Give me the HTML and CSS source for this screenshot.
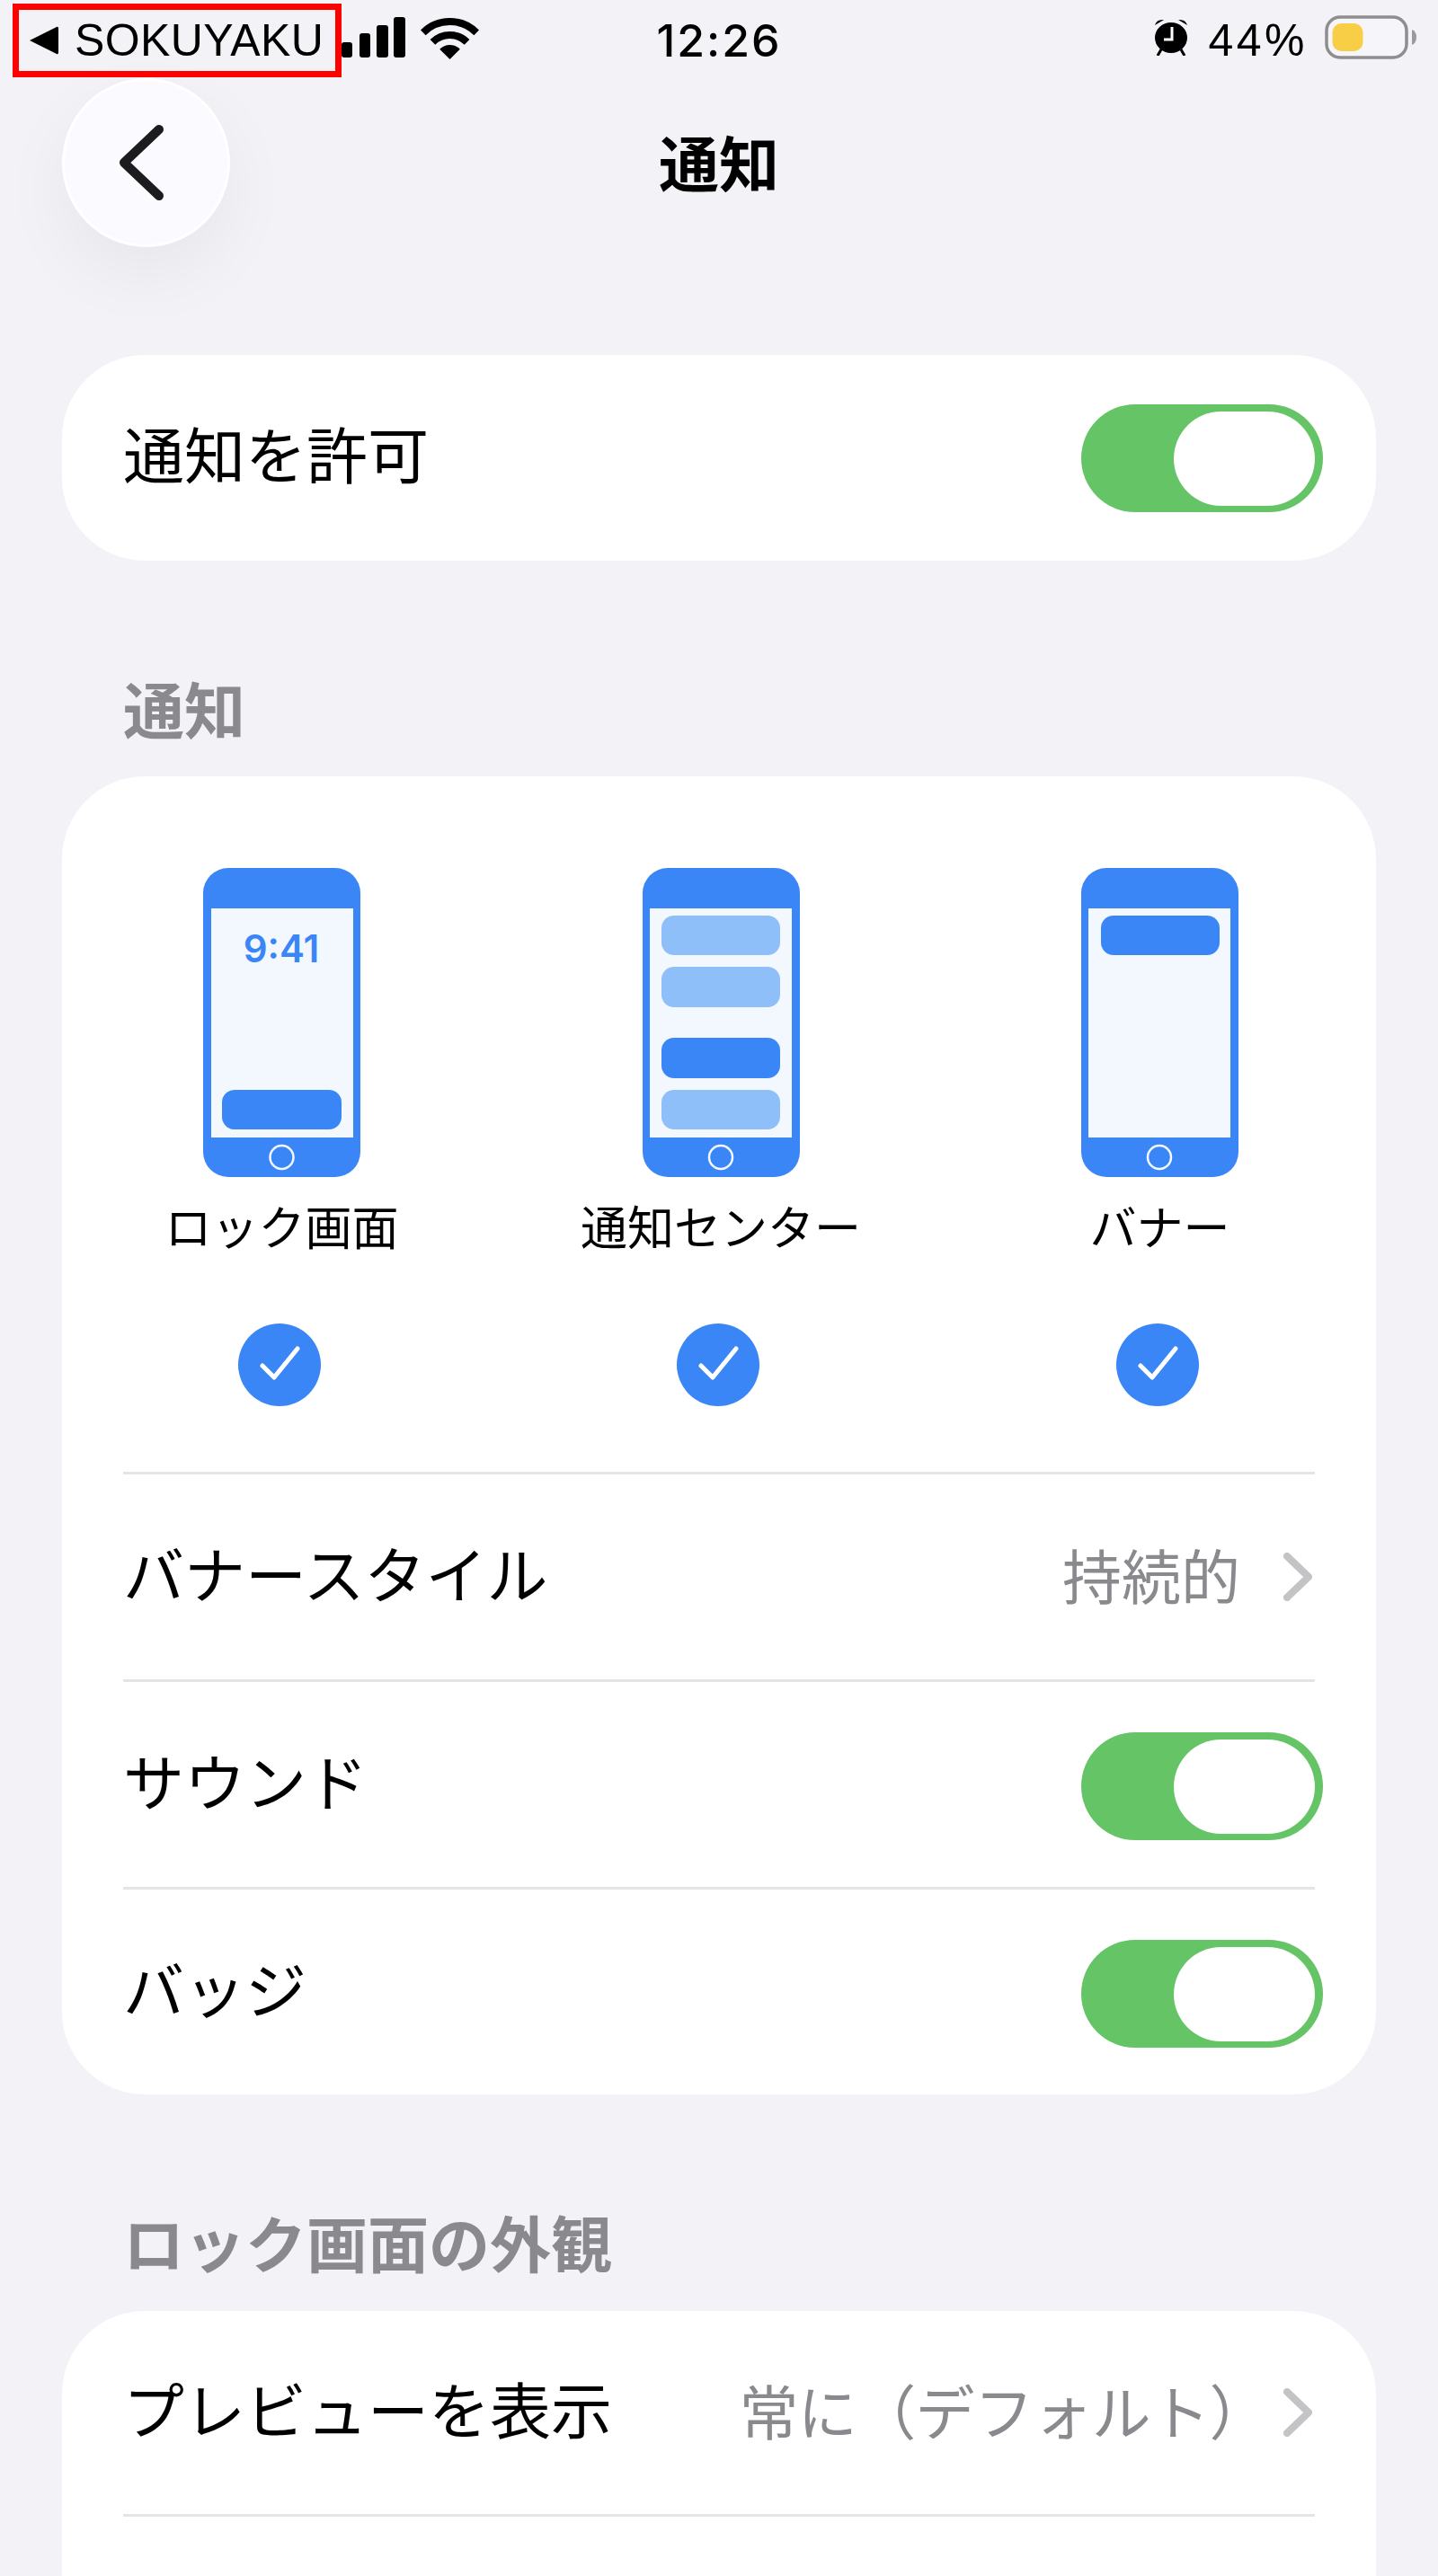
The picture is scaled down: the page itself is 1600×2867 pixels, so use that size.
FILE: index.html
```html
<!DOCTYPE html>
<html lang="ja">
<head>
  <meta charset="UTF-8">
  <title>通知</title>
  <link rel="stylesheet" href="styles.css">
</head>
<body>

  <div class="status-bar">
    <div class="status-left">
      <div class="carrier">
        <svg class="carrier-arrow" viewBox="0 0 33 32"><path d="M1 16 L31 1 Q33 0 33 3 V29 Q33 32 31 31 Z"/></svg>
        <span>SOKUYAKU</span>
      </div>
      <svg class="signal" width="71" height="45" viewBox="0 0 71 45">
        <rect x="0" y="28" width="12" height="17" rx="3"/>
        <rect x="20" y="18" width="12" height="27" rx="3"/>
        <rect x="39" y="9" width="13" height="36" rx="3"/>
        <rect x="58" y="0" width="13" height="45" rx="3"/>
      </svg>
      <svg class="wifi" width="65" height="47" viewBox="0 0 65 47">
        <path d="M2.8 16.3 A42 42 0 0 1 62.2 16.3" fill="none" stroke="#000" stroke-width="8"/>
        <path d="M13.4 26.9 A27 27 0 0 1 51.6 26.9" fill="none" stroke="#000" stroke-width="8"/>
        <path d="M32.5 46 L21.2 34.7 A16 16 0 0 1 43.8 34.7 Z"/>
      </svg>
    </div>
    <div class="status-time">12:26</div>
    <div class="status-right">
      <svg class="alarm" width="38" height="41" viewBox="0 0 38 41">
        <ellipse cx="19" cy="21" rx="18" ry="17"/>
        <path d="M1 7 Q3 0 11 1 Z M37 7 Q35 0 27 1 Z"/>
        <path d="M8 34 L4 41 M30 34 L34 41" stroke="#000" stroke-width="3" fill="none"/>
        <path d="M20 9 V23 H11" stroke="#fff" stroke-width="3" fill="none"/>
      </svg>
      <span class="battery-text">44%</span>
      <svg class="battery" width="103" height="49" viewBox="0 0 103 49">
        <rect x="2" y="2" width="89" height="45" rx="15" fill="#f6f6fa" stroke="#8e8e90" stroke-width="3.5"/>
        <rect x="8.5" y="9" width="34" height="31" rx="10" fill="#f7ce46"/>
        <path d="M97 16 Q102 18 102 24.5 Q102 31 97 33 Z" fill="#9a9a9c"/>
      </svg>
    </div>
  </div>

  <div class="nav">
    <div class="back-btn">
      <svg width="50" height="84" viewBox="0 0 50 84"><path d="M45 5 L6 42 L45 79" fill="none" stroke="#1c1c1e" stroke-width="10" stroke-linecap="round" stroke-linejoin="round"/></svg>
    </div>
    <div class="nav-title">通知</div>
    <div></div>
  </div>

  <div class="card card-single">
    <div class="row">
      <span class="row-label">通知を許可</span>
      <span class="toggle"><span class="knob"></span></span>
    </div>
  </div>

  <div class="section-title">通知</div>

  <div class="card">
    <div class="alert-types">
      <div class="alert-type">
        <svg class="phone" viewBox="0 0 175 344">
          <rect width="175" height="344" rx="28" fill="#3b86f7"/>
          <rect x="9" y="45" width="158" height="255" fill="#f3f8fe"/>
          <text class="phone-time" x="87" y="105" text-anchor="middle">9:41</text>
          <rect x="21" y="247" width="133" height="44" rx="14" fill="#3b86f7"/>
          <circle cx="87.5" cy="322" r="13" fill="none" stroke="#f3f8fe" stroke-width="2.5"/>
        </svg>
        <div class="alert-label">ロック画面</div>
        <svg class="check" viewBox="0 0 92 92">
          <circle cx="46" cy="46" r="46" fill="#3b86f7"/>
          <path d="M27 47 L40 60 L66 28" fill="none" stroke="#fff" stroke-width="5" stroke-linecap="round" stroke-linejoin="round"/>
        </svg>
      </div>
      <div class="alert-type">
        <svg class="phone" viewBox="0 0 175 344">
          <rect width="175" height="344" rx="28" fill="#3b86f7"/>
          <rect x="8" y="45" width="158" height="255" fill="#f3f8fe"/>
          <rect x="21" y="53" width="132" height="44" rx="14" fill="#8fbff9"/>
          <rect x="21" y="110" width="132" height="45" rx="14" fill="#8fbff9"/>
          <rect x="21" y="189" width="132" height="45" rx="14" fill="#3b86f7"/>
          <rect x="21" y="247" width="132" height="44" rx="14" fill="#8fbff9"/>
          <circle cx="87" cy="322" r="13" fill="none" stroke="#f3f8fe" stroke-width="2.5"/>
        </svg>
        <div class="alert-label">通知センター</div>
        <svg class="check" viewBox="0 0 92 92">
          <circle cx="46" cy="46" r="46" fill="#3b86f7"/>
          <path d="M27 47 L40 60 L66 28" fill="none" stroke="#fff" stroke-width="5" stroke-linecap="round" stroke-linejoin="round"/>
        </svg>
      </div>
      <div class="alert-type">
        <svg class="phone" viewBox="0 0 175 344">
          <rect width="175" height="344" rx="28" fill="#3b86f7"/>
          <rect x="8" y="45" width="158" height="255" fill="#f3f8fe"/>
          <rect x="22" y="53" width="132" height="44" rx="14" fill="#3b86f7"/>
          <circle cx="87" cy="322" r="13" fill="none" stroke="#f3f8fe" stroke-width="2.5"/>
        </svg>
        <div class="alert-label">バナー</div>
        <svg class="check" viewBox="0 0 92 92">
          <circle cx="46" cy="46" r="46" fill="#3b86f7"/>
          <path d="M27 47 L40 60 L66 28" fill="none" stroke="#fff" stroke-width="5" stroke-linecap="round" stroke-linejoin="round"/>
        </svg>
      </div>
    </div>
    <div class="row row-line">
      <span class="row-label">バナースタイル</span>
      <span class="row-value">
        <span class="value-text">持続的</span>
        <svg class="chevron" width="32" height="54" viewBox="0 0 32 54"><path d="M4 4 L28 27 L4 50" fill="none" stroke="#c4c4c6" stroke-width="8" stroke-linecap="round" stroke-linejoin="round"/></svg>
      </span>
    </div>
    <div class="row row-line">
      <span class="row-label">サウンド</span>
      <span class="toggle"><span class="knob"></span></span>
    </div>
    <div class="row row-line">
      <span class="row-label">バッジ</span>
      <span class="toggle"><span class="knob"></span></span>
    </div>
  </div>

  <div class="section-title">ロック画面の外観</div>

  <div class="card card-last">
    <div class="row row-preview">
      <span class="row-label">プレビューを表示</span>
      <span class="row-value">
        <span class="value-text">常に（デフォルト）</span>
        <svg class="chevron" width="32" height="54" viewBox="0 0 32 54"><path d="M4 4 L28 27 L4 50" fill="none" stroke="#c4c4c6" stroke-width="8" stroke-linecap="round" stroke-linejoin="round"/></svg>
      </span>
    </div>
    <div class="rule"></div>
  </div>

</body>
</html>
```

FILE: styles.css
```css
html, body {
  margin: 0;
  height: 2867px;
  overflow: hidden;
}
body {
  background: #f2f2f7;
  color: #000;
  font-family: "Noto Sans CJK JP", "Liberation Sans", sans-serif;
}
svg {
  display: block;
}

/* status bar */
.status-bar {
  display: grid;
  grid-template-columns: 1fr auto 1fr;
  height: 83px;
  padding-top: 4px;
  font-family: "Liberation Sans", sans-serif;
  font-size: 50px;
}
.status-left {
  display: flex;
  align-items: flex-start;
  padding-left: 14px;
}
.carrier {
  display: flex;
  align-items: center;
  gap: 18px;
  box-sizing: border-box;
  width: 366px;
  height: 82px;
  padding-left: 11px;
  border: 7px solid #f00;
  letter-spacing: 0.4px;
}
.carrier-arrow {
  width: 33px;
  height: 32px;
}
.signal {
  margin-top: 15px;
}
.wifi {
  margin: 16px 0 0 17px;
}
.status-time {
  font-family: Inter, sans-serif;
  font-weight: 500;
  letter-spacing: 2px;
  line-height: 82px;
}
.status-right {
  display: flex;
  align-items: flex-start;
  justify-content: flex-end;
  padding-right: 23px;
}
.alarm {
  margin-top: 17px;
}
.battery-text {
  margin-left: 22px;
  letter-spacing: 3.5px;
  line-height: 82px;
}
.battery {
  margin: 13px 0 0 19px;
}

/* nav */
.nav {
  display: grid;
  grid-template-columns: 1fr auto 1fr;
  align-items: center;
  height: 188px;
  margin-bottom: 120px;
  padding-left: 69px;
}
.back-btn {
  display: flex;
  align-items: center;
  justify-content: center;
  box-sizing: border-box;
  width: 187px;
  height: 188px;
  padding-right: 12px;
  background: #fbfbff;
  border: 3px solid #fff;
  border-radius: 50%;
  box-shadow: 0 30px 80px rgba(0,0,0,0.05);
}
.nav-title {
  margin: 0 69px 6px 0;
  font-size: 67px;
  font-weight: 700;
}

/* cards */
.card {
  box-sizing: border-box;
  width: 1462px;
  margin-left: 69px;
  padding: 0 68px;
  background: #fff;
  border-radius: 92px;
}
.card-single {
  height: 229px;
}
.card-last {
  height: 296px;
  margin-top: 1px;
  border-radius: 92px 92px 0 0;
}
.section-title {
  height: 126px;
  padding: 114px 0 0 137px;
  color: #8a8a8e;
  font-size: 68px;
  font-weight: 700;
  line-height: 100px;
}

/* rows */
.row {
  display: flex;
  align-items: center;
  justify-content: space-between;
  height: 229px;
  font-size: 66px;
}
.row-label {
  margin-bottom: 12px;
  font-size: 68px;
}
.row-line {
  box-sizing: border-box;
  height: 231px;
  border-top: 3px solid #e5e5e7;
}
.row-preview {
  height: 226px;
}
.rule {
  border-top: 3px solid #e5e5e7;
}
.row-value {
  display: flex;
  align-items: center;
  gap: 48px;
  color: #8a8a8e;
}
.value-text {
  margin-bottom: 8px;
}
.row-preview .row-value {
  gap: 17px;
}
.row-preview .value-text {
  letter-spacing: -0.6px;
}
.chevron {
  margin-right: 3px;
}
.toggle {
  display: flex;
  justify-content: flex-end;
  box-sizing: border-box;
  width: 269px;
  height: 120px;
  margin-right: -9px;
  padding: 8px 9px 7px;
  background: #64c466;
  border-radius: 60px;
}
.row-line .toggle {
  margin-top: 3px;
}
.knob {
  width: 157px;
  height: 105px;
  background: #fff;
  border-radius: 53px;
}

/* lock screen / center / banner picker */
.alert-types {
  display: grid;
  grid-template-columns: repeat(3, 353px);
  column-gap: 135.5px;
  box-sizing: border-box;
  width: 1330px;
  height: 774px;
  padding-top: 102px;
}
.alert-type {
  display: flex;
  flex-direction: column;
  align-items: center;
}
.phone {
  width: 175px;
  height: 344px;
}
.phone-time {
  fill: #3b86f7;
  font-family: Inter, sans-serif;
  font-size: 42px;
  font-weight: 600;
}
.alert-label {
  margin-top: 16px;
  font-size: 52px;
  line-height: 76px;
}
.check {
  width: 92px;
  height: 92px;
  margin: 71px 6px 0 0;
}
```
